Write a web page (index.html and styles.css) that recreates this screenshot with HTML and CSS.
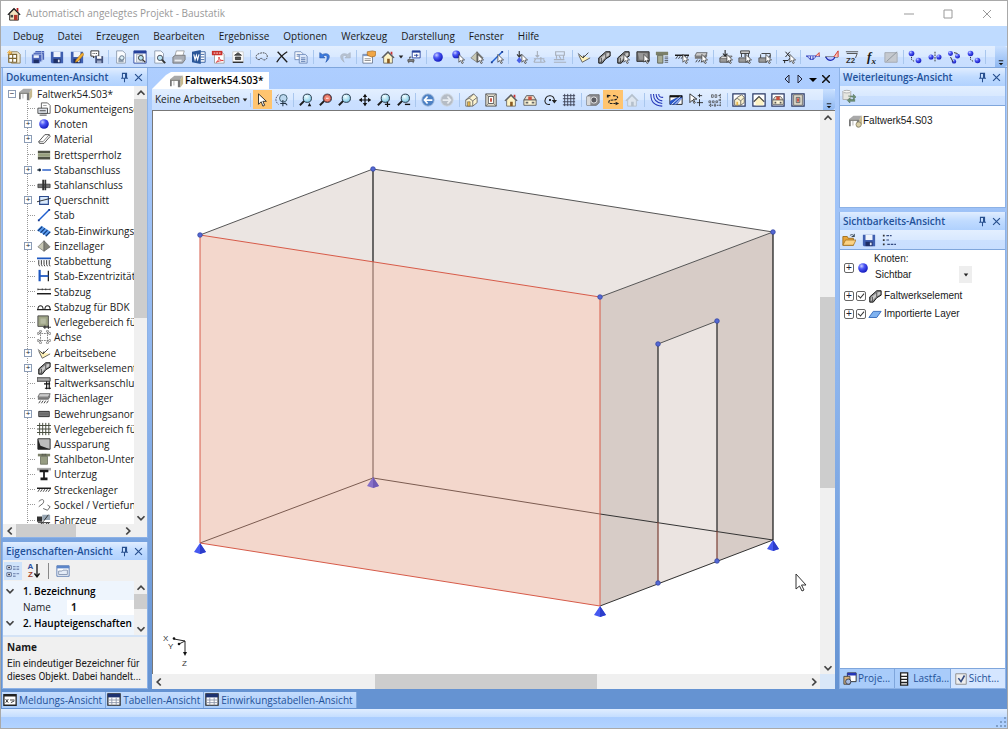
FILE: index.html
```html
<!DOCTYPE html>
<html lang="de">
<head>
<meta charset="utf-8">
<title>Automatisch angelegtes Projekt - Baustatik</title>
<link rel="stylesheet" href="styles.css">
</head>
<body>
<svg class="defs" aria-hidden="true">
<defs>
<radialGradient id="gBall" cx=".35" cy=".3" r=".75"><stop offset="0" stop-color="#c9cfff"/><stop offset=".4" stop-color="#4a55f5"/><stop offset="1" stop-color="#1016b8"/></radialGradient>
<radialGradient id="gLens" cx=".4" cy=".3" r=".8"><stop offset="0" stop-color="#f2fdff"/><stop offset="1" stop-color="#6fc4e4"/></radialGradient>
</defs>
<symbol id="cur" viewBox="0 0 16 16"><path d="M9 5v9l2-2 1.600 3.500 1.500-.7-1.600-3.300h3z" fill="#fff" stroke="#333" stroke-width=".8"/></symbol>
<symbol id="table-logo" viewBox="0 0 16 16"><path d="M0 6l5-4h10l-3 4z" fill="#a9a9a9"/><path d="M0 6h12v2H0z" fill="#8a8a86"/><path d="M0 7h2v7H0zM9 7h3v8H9z" fill="#777"/><path d="M12 6l3-4v9l-3 4z" fill="#c6b98e"/><path d="M4 8h1v5H4z" fill="#aaa"/></symbol>
<symbol id="house" viewBox="0 0 16 16"><path d="M3 8v7h10V8L8 3z" fill="#fdf3c4" stroke="#666"/><path d="M1 9l7-7 7 7" fill="none" stroke="#555" stroke-width="1.300"/><path d="M11 2h2v4l-2-2z" fill="#c33"/><path d="M7 10h3v5H7z" fill="#8a5a22"/></symbol>
<symbol id="house-app" viewBox="0 0 16 16"><path d="M3 7v8h10V7L8 2z" fill="#f5e4c0" stroke="#222"/><path d="M1 9l7-7 7 7" fill="none" stroke="#222" stroke-width="1.600"/><path d="M11 1h2v5l-2-2z" fill="#b22"/><path d="M8 9h4v6H8z" fill="#b3372a"/><path d="M4 9h3v3H4z" fill="#444"/></symbol>
<symbol id="house-off" viewBox="0 0 16 16"><path d="M3 8v7h10V8L8 3z" fill="#dde5ee" stroke="#b4bfcb"/><path d="M1 9l7-7 7 7" fill="none" stroke="#b4bfcb" stroke-width="1.500"/><path d="M7 10h3v5H7z" fill="#b4bfcb"/></symbol>
<symbol id="new" viewBox="0 0 16 16"><path d="M5 2h7l3 3v10H5z" fill="#f3ead2" stroke="#8c7a55"/><path d="M2 5h9v9H2zM2 9.500h9M6.500 5v9" fill="#fff" stroke="#7c6430" stroke-width="1.300"/><path d="M3 0v6M0 3h6M1 1l4 4M5 1L1 5" stroke="#f1a523" stroke-width=".8"/></symbol>
<symbol id="save" viewBox="0 0 16 16"><path d="M1 2h14v13H2l-1-1z" fill="#3f5fb0"/><path d="M4 2h8v6H4z" fill="#eef3fc"/><path d="M4 10h8v5H4z" fill="#1e2f66"/><path d="M9 11h2v3H9z" fill="#dfe6f5"/></symbol>
<symbol id="saveall" viewBox="0 0 16 16"><path d="M5 1h10v10h-3v2h-2v2H1V5h2V3h2z" fill="#4b64b8"/><path d="M5 3h10M3 5h10M13 5v8M12 1v10" stroke="#aebde8" fill="none" stroke-width=".8"/><path d="M3 6h6v3H3z" fill="#eef3fc"/><path d="M3 11h6v4H3z" fill="#1e2f66"/></symbol>
<symbol id="saveedit" viewBox="0 0 16 16"><use href="#save"/><path d="M14 3l2 2-7 8-3 1 1-3z" fill="#f5b234" stroke="#a36b13" stroke-width=".7"/></symbol>
<symbol id="savechat" viewBox="0 0 16 16"><path d="M1 1h9v6H6L4 9V7H1z" fill="#fff" stroke="#222"/><path d="M3 4h1M5 4h1M7 4h1" stroke="#222"/><path d="M6 7h9v8H6z" fill="#43527c"/><path d="M8 7h5v3H8z" fill="#fff"/><path d="M8 12h5v3H8z" fill="#9aa6c4"/></symbol>
<symbol id="docg" viewBox="0 0 16 16"><path d="M3 1h7l3 3v11H3z" fill="#fafcff" stroke="#8b99ad"/><path d="M5 9h6v5H5z" fill="#93a1b1"/><circle cx="9" cy="9" r="2.500" fill="#dff1f8" stroke="#586b80"/></symbol>
<symbol id="docwin" viewBox="0 0 16 16"><path d="M1 1h14v14H1z" fill="#fff" stroke="#25409a"/><path d="M1 1h14v3H1z" fill="#25409a"/><path d="M4 5h7v9H4z" fill="#e6ebf2" stroke="#8b99ad" stroke-width=".7"/><circle cx="9" cy="9" r="2.800" fill="#b9e3f3" stroke="#333"/><path d="M11 11l3 3" stroke="#333" stroke-width="1.600"/></symbol>
<symbol id="docfind" viewBox="0 0 16 16"><path d="M2 1h7l3 3v11H2z" fill="#fafcff" stroke="#8b99ad"/><circle cx="8" cy="9" r="3" fill="#b9e3f3" stroke="#445"/><path d="M10 11l4 4" stroke="#333" stroke-width="2"/></symbol>
<symbol id="print" viewBox="0 0 16 16"><path d="M5 1h9l-2 7H3z" fill="#fff" stroke="#888" stroke-width=".8"/><path d="M1 8l3-2h11v5l-3 4H1z" fill="#a9adb5" stroke="#666" stroke-width=".8"/><path d="M3 11h8v2H3z" fill="#e9ecef"/></symbol>
<symbol id="word" viewBox="0 0 16 16"><path d="M7 2h8v12H7z" fill="#fff" stroke="#2a5699"/><path d="M10 5h4M10 8h4M10 11h4" stroke="#2a5699"/><path d="M0 2l10-2v16L0 14z" fill="#2a5699"/><path d="M2 5l1.500 6L5 6l1.500 5L8 5" fill="none" stroke="#fff" stroke-width="1.300"/></symbol>
<symbol id="pdf" viewBox="0 0 16 16"><path d="M4 2h8l3 3v10H4z" fill="#fff" stroke="#999"/><path d="M1 1h12v5H1z" fill="#c9302c"/><path d="M3 3.500h8" stroke="#fff" stroke-dasharray="2 1"/><path d="M6 14c3-2 4-5 3-6 0 3 2 4 5 4-3 0-6 1-8 2z" fill="none" stroke="#d33"/></symbol>
<symbol id="plate" viewBox="0 0 16 16"><path d="M2 2h12v12H2z" fill="#fff" stroke="#ccc"/><path d="M2 14h12" stroke="#222" stroke-width="1.500"/><path d="M4 6l4-3 4 3zM5 8h6v3H5z" fill="#555" stroke="#222" stroke-width=".8"/></symbol>
<symbol id="lasso" viewBox="0 0 16 16"><path d="M5 11c-5 0-5-6 0-7 5-2 9 0 9 3 0 4-3 5-5 4-1-2-3-2-4 0z" fill="none" stroke="#333" stroke-dasharray="2 1"/></symbol>
<symbol id="del" viewBox="0 0 16 16"><path d="M3 2c3 3 7 8 11 12M14 2C9 5 5 9 2 14" fill="none" stroke="#1d1d1d" stroke-width="1.500"/></symbol>
<symbol id="copy" viewBox="0 0 16 16"><path d="M1 2h7l2 2v7H1z" fill="#fff" stroke="#6b88b8"/><path d="M6 5h7l2 2v8H6z" fill="#dbe7fa" stroke="#6b88b8"/><path d="M3 5h3M3 7h3M8 9h5M8 11h5M8 13h5" stroke="#5776ad"/></symbol>
<symbol id="undo" viewBox="0 0 16 16"><path d="M2 3v6h6L6 7c4-2 6 0 3 7 7-6 4-12-4-9z" fill="#3b7be0" stroke="#2354a8" stroke-width=".7"/></symbol>
<symbol id="redo" viewBox="0 0 16 16"><path d="M14 3v6H8l2-2c-4-2-6 0-3 7C0 8 3 2 11 5z" fill="#b9c4d2" stroke="#a3afbf" stroke-width=".7"/></symbol>
<symbol id="props" viewBox="0 0 16 16"><path d="M1 5h11v10H1z" fill="#fff" stroke="#6c7c93"/><path d="M1 5h11v2H1z" fill="#7e9bc9"/><path d="M3 10h7M3 12h7" stroke="#888"/><path d="M6 2l6-1 4 1-1 5-4 1-5-2z" fill="#f0a646" stroke="#9c5f17" stroke-width=".7"/></symbol>
<symbol id="flow" viewBox="0 0 16 16"><path d="M6 1h9v8H6z" fill="#fff" stroke="#25409a"/><path d="M6 1h9v2H6z" fill="#25409a"/><path d="M8 6h5M11 4.500V8" stroke="#25409a"/><path d="M1 11h7v2H1zM2 13v2M7 13v2M3 10V8h2" fill="#888" stroke="#555"/></symbol>
<symbol id="ball" viewBox="0 0 16 16"><circle cx="8" cy="8" r="5.500" fill="url(#gBall)"/></symbol>
<symbol id="ballc" viewBox="0 0 16 16"><circle cx="6" cy="5" r="4.500" fill="url(#gBall)"/><use href="#cur"/></symbol>
<symbol id="support" viewBox="0 0 16 16"><path d="M8 2L1 9l7 5z" fill="#c8c8b4" stroke="#666" stroke-width=".7"/><path d="M8 2l7 7-7 5z" fill="#85857a" stroke="#555" stroke-width=".7"/></symbol>
<symbol id="supportc" viewBox="0 0 16 16"><use href="#support"/><use href="#cur"/></symbol>
<symbol id="beam" viewBox="0 0 16 16"><path d="M2 14L14 2" stroke="#1f5fd0" stroke-width="1.600"/><path d="M1 13h2v2H1zM13 1h2v2h-2z" fill="#1a3b8c"/></symbol>
<symbol id="beamc" viewBox="0 0 16 16"><use href="#beam"/><use href="#cur"/></symbol>
<symbol id="loadc" viewBox="0 0 16 16"><path d="M6 1v6M3.500 5L6 8l2.500-3" fill="none" stroke="#333" stroke-width="1.300"/><path d="M3 12l3-4 3 4-3 3z" fill="#4a60e8"/><use href="#cur"/></symbol>
<symbol id="off1" viewBox="0 0 16 16"><path d="M5 1v7M3 6l2 2 2-2M1 10h12M1 14h12M3 10l-2 4M9 8v6M12 11l2 3" fill="none" stroke="#a9b1bd" stroke-width="1.300"/></symbol>
<symbol id="off2" viewBox="0 0 16 16"><path d="M3 2h10v4H3zM4 6v4M12 6v4M1 11h12M1 14h14M7 7l2 3" fill="none" stroke="#a9b1bd" stroke-width="1.300"/></symbol>
<symbol id="plane" viewBox="0 0 16 16"><path d="M2 6l4 8 9-5" fill="#fff2ba" stroke="#555"/><path d="M1 4l6 5 6-6M7 9l1-3" fill="none" stroke="#333"/></symbol>
<symbol id="elem" viewBox="0 0 16 16"><path d="M2 9l8-7 5 0v5l-5 3-4 5H2z" fill="#8b8b8b" stroke="#111" stroke-width="1.100"/><path d="M3 13l1-4 7-5 3-1v3l-5 3-4 4z" fill="#c9c9c9"/><path d="M5 14V9M10 9V4" stroke="#222" stroke-width=".8"/></symbol>
<symbol id="elemc" viewBox="0 0 16 16"><use href="#elem"/><use href="#cur"/></symbol>
<symbol id="slab" viewBox="0 0 16 16"><path d="M1 2h14v12H1z" fill="#bdbdbd" stroke="#222"/><path d="M1 2l3 8 11 4H1z" fill="#222"/></symbol>
<symbol id="slabc" viewBox="0 0 16 16"><path d="M1 2h14v11H1z" fill="#747474" stroke="#222"/><path d="M2 3l11 1v7H4z" fill="#999"/><use href="#cur"/></symbol>
<symbol id="tbeam" viewBox="0 0 16 16"><path d="M1 2h14v3H1z" fill="#7b8069"/><path d="M4 5h8v9H4z" fill="#969c82" stroke="#5d6150" stroke-width=".8"/><path d="M6 2v2M8 2v2M10 2v2" stroke="#333" stroke-width=".7"/></symbol>
<symbol id="tbeamc" viewBox="0 0 16 16"><path d="M1 2h14v4H1z" fill="#7b8069"/><path d="M3 6h6v9H3z" fill="#a8ad96" stroke="#5d6150"/><path d="M11 8h4M11 10h4M11 12h4M11 14h4" stroke="#333" stroke-width=".8"/></symbol>
<symbol id="line" viewBox="0 0 16 16"><path d="M0 6h16" stroke="#111" stroke-width="1.600"/><path d="M3 7l-2 3M6 7l-2 3M9 7l-2 3M12 7l-2 3M15 7l-2 3" stroke="#333"/></symbol>
<symbol id="linec" viewBox="0 0 16 16"><use href="#line"/><use href="#cur"/></symbol>
<symbol id="area" viewBox="0 0 16 16"><path d="M3 3h12l-2 4H1z" fill="#ccc" stroke="#333" stroke-width=".7"/><path d="M1 7h12l2-4v4l-2 3H1z" fill="#777"/><path d="M4 11l-2 3M7 11l-2 3M10 11l-2 3M13 11l-2 3" stroke="#333"/></symbol>
<symbol id="areac" viewBox="0 0 16 16"><use href="#area"/><use href="#cur"/></symbol>
<symbol id="pl1" viewBox="0 0 16 16"><path d="M1 9h12v5H1z" fill="#9a9a9a" stroke="#555"/><path d="M1 9l3-2h11l-2 2" fill="#ddd" stroke="#555"/><path d="M7 0v6M4.500 4L7 7l2.500-3" fill="none" stroke="#222" stroke-width="1.200"/><use href="#cur"/></symbol>
<symbol id="pl2" viewBox="0 0 16 16"><path d="M1 9h12v5H1z" fill="#9a9a9a" stroke="#555"/><path d="M3 1h10v3H3zM4 4v4M8 4v4M12 4v4" fill="#ccc" stroke="#333"/><use href="#cur"/></symbol>
<symbol id="pl3" viewBox="0 0 16 16"><path d="M1 9h9v5H1z" fill="#9a9a9a" stroke="#555"/><path d="M4 4h10v5M3 9V5M11 10l3-4" fill="none" stroke="#333"/><use href="#cur"/></symbol>
<symbol id="node-x" viewBox="0 0 16 16"><path d="M1 12h6l4-5M4 2l5 6M9 2L4 8M3 15v-3" fill="none" stroke="#222" stroke-width="1.100"/><use href="#cur"/></symbol>
<symbol id="mom" viewBox="0 0 16 16"><path d="M0 7h16" stroke="#1c2ab4" stroke-width="1.300"/><path d="M2 7c1 5 8 5 9 0" fill="#dbe1ff" stroke="#1c2ab4"/><path d="M5 7v4M8 7v4" stroke="#1c2ab4"/><path d="M11 7l4-4v4" fill="#ffd3cc" stroke="#d0301f"/></symbol>
<symbol id="mom2" viewBox="0 0 16 16"><path d="M0 8h15" stroke="#222"/><path d="M1 8c2 5 9 5 10 0" fill="#b8c4ff" stroke="#1c2ab4" stroke-width="1.400"/><path d="M10 8l5-7v7" fill="#ffc0b5" stroke="#d0301f"/></symbol>
<symbol id="offslab" viewBox="0 0 16 16"><path d="M1 3h14v11H1z" fill="#c5c9cf" stroke="#a2a8b0"/><path d="M3 13L15 2" stroke="#8b929c"/></symbol>
<symbol id="n1" viewBox="0 0 16 16"><circle cx="4" cy="4" r="3.200" fill="url(#gBall)"/><circle cx="12" cy="12" r="3.200" fill="url(#gBall)"/><path d="M4 8v3l3 2" fill="none" stroke="#222" stroke-dasharray="1.500 1"/></symbol>
<symbol id="n2" viewBox="0 0 16 16"><circle cx="3.500" cy="8" r="2.900" fill="url(#gBall)"/><circle cx="12.500" cy="8" r="2.900" fill="url(#gBall)"/><path d="M8 2v12" stroke="#222" stroke-dasharray="2 1"/></symbol>
<symbol id="n3" viewBox="0 0 16 16"><circle cx="4" cy="4" r="2.800" fill="url(#gBall)"/><circle cx="12" cy="7" r="2.800" fill="url(#gBall)"/><circle cx="8" cy="13" r="2.500" fill="url(#gBall)"/><path d="M4 8l3 6M8 3l4 1" stroke="#222"/></symbol>
<symbol id="selarrow" viewBox="0 0 16 16"><path d="M4 1v12l3-3 2 5 2-1-2-4.500h4z" fill="#fff" stroke="#222"/></symbol>
<symbol id="lens" viewBox="0 0 16 16"><path d="M6 9l-5 5" stroke="#1d1d1d" stroke-width="2.200"/><circle cx="9.500" cy="6" r="4.700" fill="url(#gLens)" stroke="#234" stroke-width="1.100"/></symbol>
<symbol id="lenscur" viewBox="0 0 16 16"><path d="M4 2C0 5 0 10 4 13" fill="none" stroke="#446" stroke-dasharray="2 1"/><circle cx="9.500" cy="6" r="4.300" fill="#bcd8ef" stroke="#356"/><path d="M9 8v7M6 12h7M14 14l-3-3" stroke="#234" stroke-width="1.200"/></symbol>
<symbol id="lensw" viewBox="0 0 16 16"><use href="#lens"/><path d="M10 15l2-4 2 4z" fill="#111"/></symbol>
<symbol id="lensr" viewBox="0 0 16 16"><use href="#lens"/><circle cx="9.500" cy="6" r="4.300" fill="#f08472" stroke="#733"/><path d="M8 6h3" stroke="#fff"/></symbol>
<symbol id="lensp" viewBox="0 0 16 16"><use href="#lens"/><path d="M9 13h6M12 10v6" stroke="#111" stroke-width="1.400"/></symbol>
<symbol id="lensm" viewBox="0 0 16 16"><use href="#lens"/><path d="M9 13h6" stroke="#111" stroke-width="1.600"/></symbol>
<symbol id="move" viewBox="0 0 16 16"><path d="M8 2v12M2 8h12" stroke="#111" stroke-width="1.400"/><path d="M8 1l2.500 3.500h-5zM8 15l2.500-3.500h-5zM1 8l3.500-2.500v5zM15 8l-3.500-2.500v5z" fill="#111"/></symbol>
<symbol id="back" viewBox="0 0 16 16"><circle cx="8" cy="8" r="7" fill="#4d81c4" stroke="#98b2d6"/><path d="M13 8H4M7.500 4L4 8l3.500 4" fill="none" stroke="#fff" stroke-width="2"/></symbol>
<symbol id="fwd" viewBox="0 0 16 16"><circle cx="8" cy="8" r="7" fill="#b5bcc5" stroke="#cdd3da"/><path d="M3 8h9M8.500 4L12 8l-3.500 4" fill="none" stroke="#e8ecf0" stroke-width="2"/></symbol>
<symbol id="iso" viewBox="0 0 16 16"><path d="M2 8l3-3 6-4 4 4v6l-5 4H2z" fill="#fbf3d0" stroke="#666"/><path d="M2 8l4-2 4 3v6M10 9l5-4M6 6l5-5" fill="none" stroke="#666"/><path d="M4 10h3v5H4z" fill="#e6b64c" stroke="#555" stroke-width=".6"/></symbol>
<symbol id="frame" viewBox="0 0 16 16"><path d="M2 1h12v14H2z" fill="#dedacb" stroke="#555"/><path d="M5 4h6v8H5z" fill="#fff" stroke="#555"/><path d="M2 1l3 3M14 1l-3 3M2 15l3-3M14 15l-3-3" stroke="#555" stroke-width=".7"/><path d="M7 6h2v4H7z" fill="#c4402f"/></symbol>
<symbol id="front" viewBox="0 0 16 16"><path d="M1 8l3-5h8l3 5z" fill="#e9dccd" stroke="#555"/><path d="M1 8h14v6H1z" fill="#fdf6d8" stroke="#555"/><path d="M6 4h4v4H6z" fill="#c9523f"/><path d="M3 10h3v2H3zM10 10h3v2h-3z" fill="#666"/></symbol>
<symbol id="rot" viewBox="0 0 16 16"><path d="M8 13C3 14 1 10 3 6s9-4 10 2" fill="none" stroke="#222" stroke-width="1.200"/><path d="M10 8h6l-3 4z" fill="#222"/><circle cx="8" cy="8" r="1.200"/></symbol>
<symbol id="grid" viewBox="0 0 16 16"><path d="M3 1v14M6.500 1v14M10 1v14M13.500 1v14M1 3h14M1 6.500h14M1 10h14M1 13.500h14" stroke="#3a3f52"/></symbol>
<symbol id="cam" viewBox="0 0 16 16"><path d="M1 4l3-2h11v9l-3 3H1z" fill="#8e8e92" stroke="#666"/><path d="M1 4h4v10H1z" fill="#d8d8d8"/><circle cx="9" cy="8" r="3.500" fill="#5a5a60" stroke="#eee"/></symbol>
<symbol id="route" viewBox="0 0 16 16"><path d="M2 3h4M8 3c8 0 6 5 0 5S2 12 6 12h5" fill="none" stroke="#222" stroke-width="1.300" stroke-dasharray="3 1"/><path d="M1 2h2v3H1zM11 10l4 2-4 2z" fill="#222"/></symbol>
<symbol id="iso-lines" viewBox="0 0 16 16"><path d="M1 1c0 9 3 13 13 14M4 1c0 7 3 10 10 11M7 1c0 5 2 7 7 8M10 1c0 3 1 4 5 4" fill="none" stroke="#2436b8" stroke-width="1.200"/></symbol>
<symbol id="section" viewBox="0 0 16 16"><path d="M1 3h14v10H1z" fill="#fff" stroke="#111"/><path d="M1 13V9l12-6h2v3L9 13z" fill="#2a57c8"/><path d="M1 3h14v2H1z" fill="#111"/><path d="M3 13L13 4M7 13l7-7" stroke="#fff"/></symbol>
<symbol id="curmove" viewBox="0 0 16 16"><path d="M1 1v10l3-3 2 4 1-1-2-4h4z" fill="#fff" stroke="#222"/><path d="M12 1v4M10 3h5M12 7v8M9 11h7" stroke="#222"/></symbol>
<symbol id="dims" viewBox="0 0 16 16"><path d="M14 1v14M1 14h13M12 3h3M12 8h3M3 12v4M8 12v4" stroke="#333" stroke-dasharray="2 1"/><path d="M4 2h2v3H4zM8 2h2v3H8zM1 9h2v2H1zM5 9h2v2H5zM9 9h2v2H9z" fill="none" stroke="#444" stroke-width=".8"/></symbol>
<symbol id="box" viewBox="0 0 16 16"><path d="M1 1h14v14H1z" fill="#fff" stroke="#2b3a66" stroke-width="1.400"/></symbol>
<symbol id="b-iso" viewBox="0 0 16 16"><use href="#box"/><path d="M3 8l3-3 5-3 3 3v6l-4 3H3z" fill="#fbf3d0" stroke="#666"/><path d="M3 8l3-2 4 3v5M10 9l4-4" fill="none" stroke="#666"/><path d="M5 10h2v4H5z" fill="#e6b64c"/></symbol>
<symbol id="b-house" viewBox="0 0 16 16"><use href="#box"/><path d="M4 14V8l4-4 5 4v6z" fill="#fdf3c4"/><path d="M2 10l6-6 6 6" fill="none" stroke="#444" stroke-width="1.300"/></symbol>
<symbol id="b-front" viewBox="0 0 16 16"><use href="#box"/><path d="M2 8l3-4h6l3 4z" fill="#e9dccd" stroke="#666"/><path d="M2 8h12v5H2z" fill="#fdf6d8" stroke="#666"/><path d="M6 4h4v4H6z" fill="#c9523f"/><path d="M4 10h2v2H4zM10 10h2v2h-2z" fill="#555"/></symbol>
<symbol id="b-frame" viewBox="0 0 16 16"><use href="#box"/><path d="M3 2h10v12H3z" fill="#dedacb" stroke="#666"/><path d="M6 5h4v6H6z" fill="#fff" stroke="#555"/><path d="M7 6h2v4H7z" fill="#c4402f"/></symbol>
<symbol id="doc" viewBox="0 0 16 16"><path d="M5 1h7l3 3v9H5z" fill="#fff" stroke="#555"/><path d="M1 7h11v6H1z" fill="#dfe3ea" stroke="#444"/><path d="M3 10h7M3 15h8" stroke="#333"/><path d="M7 4h4" stroke="#999"/></symbol>
<symbol id="mat" viewBox="0 0 16 16"><path d="M2 11l7-8h5l1 2-7 8H3z" fill="#fff" stroke="#444"/><path d="M3 13l-1-2h5l7-8" fill="none" stroke="#777"/></symbol>
<symbol id="clt" viewBox="0 0 16 16"><path d="M1 3h14v3H1zM1 10h14v3H1z" fill="#4e5144"/><path d="M1 6h14v4H1z" fill="#99a17f"/></symbol>
<symbol id="conn" viewBox="0 0 16 16"><path d="M6 8h10" stroke="#2058c8" stroke-width="1.600"/><circle cx="3" cy="8" r="1.600" fill="#123"/><path d="M0 8h2" stroke="#123"/></symbol>
<symbol id="steel" viewBox="0 0 16 16"><path d="M1 7h14v4H1z" fill="#777" stroke="#222" stroke-width=".7"/><path d="M6 2h2v12H6zM8.500 2h2v12h-2z" fill="#333"/></symbol>
<symbol id="cross" viewBox="0 0 16 16"><path d="M3 4h10v9H3z" fill="#d9e9fb" stroke="#2b4a8c" stroke-width="1.300"/><path d="M0 10l16-4" stroke="#222"/></symbol>
<symbol id="load" viewBox="0 0 16 16"><path d="M0 7l5-5 11 7-5 5z" fill="#5b9df0"/><path d="M1 8l5-5M4 10l5-5M7 12l5-5M10 14l5-5" stroke="#123a7a" stroke-width="1.300"/></symbol>
<symbol id="bed" viewBox="0 0 16 16"><path d="M0 5h16" stroke="#1d57c0" stroke-width="2"/><path d="M2 7v5l1 2M5 7v5l1 2M8 7v5l1 2M11 7v5l1 2M14 7v5l1 2" fill="none" stroke="#222"/></symbol>
<symbol id="exz" viewBox="0 0 16 16"><path d="M3 1v13" stroke="#1d57c0" stroke-width="2.500"/><path d="M13 2v12" stroke="#222" stroke-width="1.500"/><path d="M3 8h10" stroke="#1d57c0" stroke-width="2"/></symbol>
<symbol id="zug" viewBox="0 0 16 16"><path d="M0 10h16" stroke="#111" stroke-width="1.600"/><path d="M1 5h14M1 4v2M6 4v2M10 4v2M15 4v2" stroke="#333"/></symbol>
<symbol id="bdk" viewBox="0 0 16 16"><path d="M0 11h16M1 11c0-6 6-6 6 0M9 11c0-6 6-6 6 0" fill="none" stroke="#222" stroke-width="1.200"/></symbol>
<symbol id="zone" viewBox="0 0 16 16"><path d="M1 1h12v12H1z" fill="#9fa587" stroke="#444"/><path d="M4 4h6v6H4z" fill="#b6bba2"/><path d="M7 14h9M9 12v4M13 12v4" stroke="#222"/></symbol>
<symbol id="axis" viewBox="0 0 16 16"><path d="M4 2v12M12 2v12M2 4h12M2 12h12" stroke="#777" stroke-dasharray="2 1"/><g fill="none" stroke="#777"><circle cx="4" cy="1.500" r="1.200"/><circle cx="12" cy="1.500" r="1.200"/><circle cx="1.500" cy="4" r="1.200"/><circle cx="1.500" cy="12" r="1.200"/><circle cx="14.500" cy="4" r="1.200"/><circle cx="14.500" cy="12" r="1.200"/><circle cx="4" cy="14.500" r="1.200"/><circle cx="12" cy="14.500" r="1.200"/></g></symbol>
<symbol id="fconn" viewBox="0 0 16 16"><path d="M0 2h15v4H0z" fill="#aaa" stroke="#333"/><path d="M11 6v9M14 6v9" stroke="#222" stroke-width="1.400"/><path d="M8 9h7M9 14h7" fill="none" stroke="#111" stroke-width="1.300"/></symbol>
<symbol id="rebar" viewBox="0 0 16 16"><path d="M2 5h12v6H2z" fill="#8c8c8c" stroke="#222"/><path d="M3 7h10M3 9h10" stroke="#555"/></symbol>
<symbol id="mesh" viewBox="0 0 16 16"><path d="M3 1v14M6.500 1v14M10 1v14M13.500 1v14M0 4h16M0 8h16M0 12h16" stroke="#454a3c" stroke-width="1.100"/></symbol>
<symbol id="ibeam" viewBox="0 0 16 16"><path d="M0 1h16v3H0z" fill="#aaa"/><path d="M3 3h10v3H9v6h3v3H4v-3h3V6H3z" fill="#1b1b1b"/></symbol>
<symbol id="sockel" viewBox="0 0 16 16"><path d="M2 4c4-4 7-2 5 2l-5 4M7 12l5 2 3-4-3-2" fill="none" stroke="#666" stroke-width="1.100"/></symbol>
<symbol id="car" viewBox="0 0 16 16"><path d="M0 4h6v6H0z" fill="#333"/><path d="M6 2h9v6H6z" fill="#9aa8b5"/><path d="M1 11h14M3 14l3-3 3 3 3-3 3 3M7 10l6-8" fill="none" stroke="#222"/></symbol>
<symbol id="cats" viewBox="0 0 16 16"><path d="M1 2h5v4H1zM1 10h5v4H1z" fill="#fff" stroke="#445a86"/><path d="M3.500 3v2M2.500 4h2M3.500 11v2M2.500 12h2" stroke="#223"/><path d="M8 3h3M12 3h3M8 6h3M12 6h3M8 11h3M12 11h3M8 14h3" stroke="#7f93bb" stroke-width="1.500"/></symbol>
<symbol id="page" viewBox="0 0 16 16"><path d="M1 2h14v12H1z" fill="#fff" stroke="#4f72ad"/><path d="M1 2h14v3H1z" fill="#5c86c9"/><path d="M3 8h4l1-1h5v5H3z" fill="#e4ecf7" stroke="#8090ad"/></symbol>
<symbol id="link" viewBox="0 0 16 16"><path d="M1 3h9v9H1z" fill="#e6e6e0" stroke="#aaa"/><ellipse cx="5.500" cy="3" rx="4.500" ry="1.500" fill="#f6f6f3" stroke="#aaa"/><path d="M7 8h6V6l3 3-3 3v-2M15 12H9v-2l-3 3 3 3v-2h6" fill="#6d9076" stroke="#4c6b54" stroke-width=".6"/></symbol>
<symbol id="logo-link" viewBox="0 0 16 16"><use href="#table-logo"/><circle cx="11" cy="12" r="3" fill="#d9cfa8" stroke="#8a8468"/></symbol>
<symbol id="open" viewBox="0 0 16 16"><path d="M1 4h5l1 2h6v8H1z" fill="#e8a53a" stroke="#9c6a17"/><path d="M1 14l3-6h12l-3 6z" fill="#fbd284" stroke="#9c6a17" stroke-width=".8"/><path d="M9 3c2-2 4-1 5 1M14 1v3h-3" fill="none" stroke="#234"/></symbol>
<symbol id="list" viewBox="0 0 16 16"><path d="M1 2h2v2H1zM1 7h2v2H1zM1 12h2v2H1z" fill="#333"/><path d="M5 3h6M5 8h4M6 13h10" stroke="#334a80" stroke-width="1.300" stroke-dasharray="3 1"/></symbol>
<symbol id="layer" viewBox="0 0 16 16"><path d="M1 12l5-7h9l-5 7z" fill="#7fb2f0" stroke="#2f66b8"/></symbol>
<symbol id="proj" viewBox="0 0 16 16"><path d="M5 1h10v10H5z" fill="#fff" stroke="#222"/><path d="M5 1h10v3H5z" fill="#2436b8"/><path d="M1 5h7v9H1z" fill="#d6b07a" stroke="#444"/><circle cx="6" cy="11" r="3" fill="#a7bbe0" stroke="#334"/></symbol>
<symbol id="cases" viewBox="0 0 16 16"><path d="M3 1h8v14H3zM3 5h8M3 8.500h8M3 12h8" fill="#fff" stroke="#222" stroke-width="1.500"/></symbol>
<symbol id="tick" viewBox="0 0 16 16"><path d="M2 2h12v12H2z" fill="#eee" stroke="#888"/><path d="M5 7l3 4 4-7" fill="none" stroke="#334a80" stroke-width="1.800"/></symbol>
<symbol id="msg" viewBox="0 0 16 16"><path d="M1 2h14v12H1z" fill="#fff" stroke="#222" stroke-width="1.500"/><path d="M1 2h14v2H1z" fill="#222"/><path d="M3 7l3 4M6 7l-3 4M8 8h5M9 11l4-2" stroke="#222"/></symbol>
<symbol id="tab" viewBox="0 0 16 16"><path d="M1 1h14v13H1z" fill="#fff" stroke="#222" stroke-width="1.400"/><path d="M1 1h14v4H1z" fill="#1d3270"/><path d="M1 8h14M1 11h14M5.500 5v9M10.500 5v9" stroke="#8a93a8"/></symbol>
<symbol id="pin" viewBox="0 0 16 16"><path d="M5 2h6v7H5zM9.500 2v7M3 9h10M8 9v6" fill="none" stroke="#274f8e" stroke-width="1.500"/></symbol>
<symbol id="close" viewBox="0 0 16 16"><path d="M3 3l10 10M13 3L3 13" stroke="#274f8e" stroke-width="1.700"/></symbol>
<symbol id="up" viewBox="0 0 16 16"><path d="M4 10l4-4 4 4" fill="none" stroke="#444" stroke-width="2"/></symbol>
<symbol id="down" viewBox="0 0 16 16"><path d="M4 6l4 4 4-4" fill="none" stroke="#444" stroke-width="2"/></symbol>
<symbol id="left" viewBox="0 0 16 16"><path d="M10 4L6 8l4 4" fill="none" stroke="#444" stroke-width="2"/></symbol>
<symbol id="right" viewBox="0 0 16 16"><path d="M6 4l4 4-4 4" fill="none" stroke="#444" stroke-width="2"/></symbol>
<symbol id="drop" viewBox="0 0 8 8"><path d="M1 2h6L4 6z" fill="#222"/></symbol>
<symbol id="more" viewBox="0 0 8 8"><path d="M1 1h6" stroke="#111" stroke-width="1.200"/><path d="M1 4h6L4 7z" fill="#111"/></symbol>
</svg>

<div class="window">
<header class="titlebar">
  <svg class="ico"><use href="#house-app"/></svg>
  <h1>Automatisch angelegtes Projekt - Baustatik</h1>
  <button aria-label="Minimieren"><svg viewBox="0 0 12 12"><path d="M1 6h10" stroke="#999"/></svg></button>
  <button aria-label="Maximieren"><svg viewBox="0 0 12 12"><path d="M2 2h8v8H2z" fill="none" stroke="#999"/></svg></button>
  <button aria-label="Schließen"><svg viewBox="0 0 12 12"><path d="M2 2l8 8M10 2l-8 8" stroke="#999"/></svg></button>
</header>

<nav class="menu">
  <button>Debug</button><button>Datei</button><button>Erzeugen</button><button>Bearbeiten</button><button>Ergebnisse</button><button>Optionen</button><button>Werkzeug</button><button>Darstellung</button><button>Fenster</button><button>Hilfe</button>
</nav>

<div class="toolbar main-tools" role="toolbar" aria-label="Standard">
  <div class="tools">
  <button aria-label="Neu"><svg><use href="#new"/></svg></button><i></i>
  <button aria-label="Alle speichern"><svg><use href="#saveall"/></svg></button>
  <button aria-label="Speichern"><svg><use href="#save"/></svg></button>
  <button aria-label="Speichern unter"><svg><use href="#saveedit"/></svg></button>
  <button aria-label="Mit Kommentar speichern"><svg><use href="#savechat"/></svg></button><i></i>
  <button aria-label="Dokument"><svg><use href="#docg"/></svg></button>
  <button aria-label="Vorschaufenster"><svg><use href="#docwin"/></svg></button>
  <button aria-label="Seitenansicht"><svg><use href="#docfind"/></svg></button>
  <button aria-label="Drucken"><svg><use href="#print"/></svg></button>
  <button aria-label="Word"><svg><use href="#word"/></svg></button>
  <button aria-label="PDF"><svg><use href="#pdf"/></svg></button>
  <button aria-label="Ausgabe"><svg><use href="#plate"/></svg></button><i></i>
  <button aria-label="Lasso"><svg><use href="#lasso"/></svg></button>
  <button aria-label="Löschen"><svg><use href="#del"/></svg></button>
  <button aria-label="Kopieren"><svg><use href="#copy"/></svg></button><i></i>
  <button aria-label="Rückgängig"><svg><use href="#undo"/></svg></button>
  <button aria-label="Wiederholen"><svg><use href="#redo"/></svg></button><i></i>
  <button aria-label="Eigenschaften"><svg><use href="#props"/></svg></button>
  <button aria-label="Start"><svg><use href="#house"/></svg></button>
  <button class="narrow" aria-label="Startauswahl"><svg><use href="#drop"/></svg></button>
  <button aria-label="Ablauf"><svg><use href="#flow"/></svg></button><i></i>
  <button aria-label="Knoten"><svg><use href="#ball"/></svg></button>
  <button aria-label="Knoten wählen"><svg><use href="#ballc"/></svg></button>
  <button aria-label="Lager wählen"><svg><use href="#supportc"/></svg></button>
  <button aria-label="Stab wählen"><svg><use href="#beamc"/></svg></button><i></i>
  <button aria-label="Knotenlast"><svg><use href="#loadc"/></svg></button>
  <button aria-label="Stablast" disabled><svg><use href="#off1"/></svg></button>
  <button aria-label="Temperatur" disabled><svg><use href="#off2"/></svg></button><i></i>
  <button aria-label="Arbeitsebene"><svg><use href="#plane"/></svg></button>
  <button aria-label="Faltwerkselement"><svg><use href="#elem"/></svg></button>
  <button aria-label="Element wählen"><svg><use href="#elemc"/></svg></button>
  <button aria-label="Aussparung"><svg><use href="#slabc"/></svg></button>
  <button aria-label="Unterzug"><svg><use href="#tbeamc"/></svg></button>
  <button aria-label="Streckenlager"><svg><use href="#linec"/></svg></button>
  <button aria-label="Flächenlager"><svg><use href="#areac"/></svg></button><i></i>
  <button aria-label="Punktlast"><svg><use href="#pl1"/></svg></button>
  <button aria-label="Linienlast"><svg><use href="#pl2"/></svg></button>
  <button aria-label="Flächenlast"><svg><use href="#pl3"/></svg></button><i></i>
  <button aria-label="Koppelung"><svg><use href="#node-x"/></svg></button><i></i>
  <button aria-label="Schnittgrößen"><svg><use href="#mom"/></svg></button>
  <button aria-label="Umhüllende"><svg><use href="#mom2"/></svg></button>
  <button aria-label="Bemessung"><svg viewBox="0 0 16 16"><path d="M1 2h14M2 4h12l-2 5" fill="none" stroke="#444"/><text class="g-z2" x="1" y="15">Z2</text></svg></button>
  <button class="fx" aria-label="Funktion">f<sub>x</sub></button>
  <button aria-label="Schnitt" disabled><svg><use href="#offslab"/></svg></button><i></i>
  <button aria-label="Verschieben"><svg><use href="#n1"/></svg></button>
  <button aria-label="Spiegeln"><svg><use href="#n2"/></svg></button>
  <button aria-label="Drehen"><svg><use href="#n3"/></svg></button>
  <button aria-label="Vervielfältigen"><svg><use href="#n1"/></svg></button><i></i>
  </div>
  <button class="more" aria-label="Weitere"><svg><use href="#more"/></svg></button>
</div>

<main class="work">
  <div class="left">
    <section class="panel docs">
      <header class="phead"><h2>Dokumenten-Ansicht</h2><button aria-label="Anheften"><svg><use href="#pin"/></svg></button><button aria-label="Schließen"><svg><use href="#close"/></svg></button></header>
      <div class="docbody">
        <div class="treebox">
        <ul class="tree">
          <li class="root"><button aria-label="Zuklappen">−</button><svg><use href="#table-logo"/></svg>Faltwerk54.S03*</li>
          <li><b></b><svg><use href="#doc"/></svg>Dokumenteigenschaften</li>
          <li><button aria-label="Aufklappen">+</button><svg><use href="#ball"/></svg>Knoten</li>
          <li><button aria-label="Aufklappen">+</button><svg><use href="#mat"/></svg>Material</li>
          <li><b></b><svg><use href="#clt"/></svg>Brettsperrholz</li>
          <li><button aria-label="Aufklappen">+</button><svg><use href="#conn"/></svg>Stabanschluss</li>
          <li><b></b><svg><use href="#steel"/></svg>Stahlanschluss</li>
          <li><button aria-label="Aufklappen">+</button><svg><use href="#cross"/></svg>Querschnitt</li>
          <li><b></b><svg><use href="#beam"/></svg>Stab</li>
          <li><b></b><svg><use href="#load"/></svg>Stab-Einwirkungsverteiler</li>
          <li><button aria-label="Aufklappen">+</button><svg><use href="#support"/></svg>Einzellager</li>
          <li><b></b><svg><use href="#bed"/></svg>Stabbettung</li>
          <li><b></b><svg><use href="#exz"/></svg>Stab-Exzentrizität</li>
          <li><b></b><svg><use href="#zug"/></svg>Stabzug</li>
          <li><b></b><svg><use href="#bdk"/></svg>Stabzug für BDK</li>
          <li><b></b><svg><use href="#zone"/></svg>Verlegebereich für Stützen</li>
          <li><b></b><svg><use href="#axis"/></svg>Achse</li>
          <li><button aria-label="Aufklappen">+</button><svg><use href="#plane"/></svg>Arbeitsebene</li>
          <li><button aria-label="Aufklappen">+</button><svg><use href="#elem"/></svg>Faltwerkselement</li>
          <li><b></b><svg><use href="#fconn"/></svg>Faltwerksanschluss</li>
          <li><b></b><svg><use href="#area"/></svg>Flächenlager</li>
          <li><button aria-label="Aufklappen">+</button><svg><use href="#rebar"/></svg>Bewehrungsanordnung</li>
          <li><b></b><svg><use href="#mesh"/></svg>Verlegebereich für Matten</li>
          <li><b></b><svg><use href="#slab"/></svg>Aussparung</li>
          <li><b></b><svg><use href="#tbeam"/></svg>Stahlbeton-Unterzug</li>
          <li><b></b><svg><use href="#ibeam"/></svg>Unterzug</li>
          <li><b></b><svg><use href="#line"/></svg>Streckenlager</li>
          <li><b></b><svg><use href="#sockel"/></svg>Sockel / Vertiefung</li>
          <li><b></b><svg><use href="#car"/></svg>Fahrzeug</li>
        </ul>
        </div>
        <div class="vbar"><button aria-label="Nach oben"><svg><use href="#up"/></svg></button><span class="t-docs"></span><em></em><button aria-label="Nach unten"><svg><use href="#down"/></svg></button></div>
      </div>
      <div class="hbar"><button aria-label="Nach links"><svg><use href="#left"/></svg></button><span class="t-docsh"></span><em></em><button aria-label="Nach rechts"><svg><use href="#right"/></svg></button><u></u></div>
    </section>

    <section class="panel props">
      <header class="phead"><h2>Eigenschaften-Ansicht</h2><button aria-label="Anheften"><svg><use href="#pin"/></svg></button><button aria-label="Schließen"><svg><use href="#close"/></svg></button></header>
      <div class="ptools"><button class="on" aria-label="Kategorien"><svg><use href="#cats"/></svg></button><button class="az" aria-label="Alphabetisch"><span>A<br><em>Z</em></span><svg viewBox="0 0 6 16"><path d="M3 1v12M.5 10.500L3 14l2.500-3.500" fill="none" stroke="#111" stroke-width="1.300"/></svg></button><i></i><button aria-label="Eigenschaftenseiten"><svg><use href="#page"/></svg></button></div>
      <div class="pgrid">
        <div class="prows">
          <div class="cat"><svg><use href="#down"/></svg>1. Bezeichnung</div>
          <div class="prow"><label for="name">Name</label><input id="name" value="1"></div>
          <div class="cat"><svg><use href="#down"/></svg>2. Haupteigenschaften</div>
        </div>
        <div class="vbar"><button aria-label="Nach oben"><svg><use href="#up"/></svg></button><span class="t-props"></span><em></em><button aria-label="Nach unten"><svg><use href="#down"/></svg></button></div>
      </div>
      <div class="pdesc"><strong>Name</strong><p>Ein eindeutiger Bezeichner für dieses Objekt. Dabei handelt...</p></div>
    </section>
  </div>

  <section class="centre">
    <div class="tabs">
      <div class="doctab"><svg><use href="#table-logo"/></svg>Faltwerk54.S03*</div>
      <div class="tabctl">
        <button aria-label="Voriges"><svg viewBox="0 0 8 8"><path d="M6 0v8L2 4z" fill="none" stroke="#223"/></svg></button>
        <button aria-label="Nächstes"><svg viewBox="0 0 8 8"><path d="M2 0v8l4-4z" fill="none" stroke="#223"/></svg></button>
        <button aria-label="Liste"><svg viewBox="0 0 8 8"><path d="M0 3h8L4 7z"/></svg></button>
        <button aria-label="Schließen"><svg viewBox="0 0 8 8"><path d="M0 0l8 8M8 0L0 8" stroke="#111" stroke-width="1.500"/></svg></button>
      </div>
    </div>
    <div class="toolbar doc-tools" role="toolbar" aria-label="Ansicht">
      <button class="wp">Keine Arbeitseben<svg><use href="#drop"/></svg></button>
      <div class="tools">
      <i></i>
      <button class="on" aria-label="Auswählen"><svg><use href="#selarrow"/></svg></button>
      <button aria-label="Zoom dynamisch"><svg><use href="#lenscur"/></svg></button><i></i>
      <button aria-label="Zoom Fenster"><svg><use href="#lensw"/></svg></button>
      <button aria-label="Zoom alles"><svg><use href="#lensr"/></svg></button>
      <button aria-label="Zoom"><svg><use href="#lens"/></svg></button>
      <button aria-label="Verschieben"><svg><use href="#move"/></svg></button>
      <button aria-label="Vergrößern"><svg><use href="#lensp"/></svg></button>
      <button aria-label="Verkleinern"><svg><use href="#lensm"/></svg></button><i></i>
      <button aria-label="Zurück"><svg><use href="#back"/></svg></button>
      <button aria-label="Vor" disabled><svg><use href="#fwd"/></svg></button><i></i>
      <button aria-label="Isometrie"><svg><use href="#iso"/></svg></button>
      <button aria-label="Draufsicht"><svg><use href="#frame"/></svg></button>
      <button aria-label="Vorderansicht"><svg><use href="#house"/></svg></button>
      <button aria-label="Seitenansicht"><svg><use href="#front"/></svg></button>
      <button aria-label="Drehen"><svg><use href="#rot"/></svg></button>
      <button aria-label="Raster"><svg><use href="#grid"/></svg></button><i></i>
      <button aria-label="Kamera"><svg><use href="#cam"/></svg></button>
      <button class="on" aria-label="Animation"><svg><use href="#route"/></svg></button>
      <button aria-label="Haus" disabled><svg><use href="#house-off"/></svg></button><i></i>
      <button aria-label="Isolinien"><svg><use href="#iso-lines"/></svg></button>
      <button aria-label="Schnitt"><svg><use href="#section"/></svg></button>
      <button aria-label="Punkt wählen"><svg><use href="#curmove"/></svg></button>
      <button aria-label="Bemaßung"><svg><use href="#dims"/></svg></button><i></i>
      <button aria-label="Ansicht 3D"><svg><use href="#b-iso"/></svg></button>
      <button aria-label="Ansicht vorn"><svg><use href="#b-house"/></svg></button>
      <button aria-label="Ansicht Seite"><svg><use href="#b-front"/></svg></button>
      <button aria-label="Ansicht oben"><svg><use href="#b-frame"/></svg></button>
      </div>
      <button class="more" aria-label="Weitere"><svg><use href="#more"/></svg></button>
    </div>
    <div class="view">
      <svg class="model" viewBox="153 111 667 563" preserveAspectRatio="xMinYMin meet" role="img" aria-label="3D-Modell">
        <path d="M200 235L373 169l400 63-173 65z" fill="#ebe5e2"/>
        <path d="M600 297l173-65v308l-173 66z" fill="#d7ccc7"/>
        <path d="M658 344l59-23v240l-59 22z" fill="#ebe4e1"/>
        <path d="M200 235l400 62v309l-400-63z" fill="#f3d7cc"/>
        <g fill="none" stroke="#555" stroke-width="1">
          <path d="M200 235L373 169l400 63-173 65"/>
          <path d="M373 169v93" stroke="#222" stroke-width="1.300"/>
          <path d="M373 262v216M200 543l173-65 227 36" stroke="#7b5b50"/>
          <path d="M600 514l173 26-173 66" stroke="#333"/>
          <path d="M773 232v308" stroke="#222" stroke-width="1.300"/>
          <path d="M658 344l59-23"/>
          <path d="M658 344v178M717 321v210" stroke="#222" stroke-width="1.200"/>
          <path d="M658 522v61M717 531v30" stroke="#7a3f35" stroke-width="1.200"/>
          <path d="M200 235l400 62v309l-400-63z" stroke="#d65a48"/>
        </g>
        <g fill="#5468d4" stroke="#2c3f9e" stroke-width=".7">
          <circle cx="373" cy="169" r="2.300"/><circle cx="773" cy="232" r="2.300"/><circle cx="600" cy="297" r="2.300"/><circle cx="200" cy="235" r="2.300"/>
          <circle cx="658" cy="344" r="2.300"/><circle cx="717" cy="321" r="2.300"/><circle cx="717" cy="561" r="2.300"/><circle cx="658" cy="583" r="2.300"/>
        </g>
        <path d="M200 543l6 9-6 2-6-2zM600 606l6 9-6 2-6-2zM773 540l6 9-6 2-6-2z" fill="#4659f0"/>
        <path d="M200 543l6 9-6 2zM600 606l6 9-6 2zM773 540l6 9-6 2z" fill="#2c3dcb"/>
        <path d="M373 477l6 9-6 2-6-2z" fill="#8670c8"/>
        <path d="M373 477l6 9-6 2z" fill="#705ab4"/>
        <path d="M174 639l11 2v13M179 644l6-3" fill="none" stroke="#222"/>
        <g fill="#111"><circle cx="174" cy="638.500" r="1.300"/><circle cx="179" cy="644" r="1.300"/><path d="M183 652h4l-2 4z"/></g>
        <g class="axes"><text x="163" y="641">X</text><text x="168" y="649">Y</text><text x="182" y="666">Z</text></g>
        <path d="M796 574v15l3.500-3 2.500 5 2-1-2.500-5h4.500z" fill="#fff" stroke="#333"/>
      </svg>
      <div class="vbar wide"><button aria-label="Nach oben"><svg><use href="#up"/></svg></button><em class="pre-v"></em><span class="t-view"></span><em class="post-v"></em><button aria-label="Nach unten"><svg><use href="#down"/></svg></button></div>
    </div>
    <div class="hbar tall"><button aria-label="Nach links"><svg><use href="#left"/></svg></button><em class="pre-h"></em><span class="t-viewh"></span><em class="post-h"></em><button aria-label="Nach rechts"><svg><use href="#right"/></svg></button><u></u></div>
  </section>

  <div class="right">
    <section class="panel fwd">
      <header class="phead"><h2>Weiterleitungs-Ansicht</h2><button aria-label="Anheften"><svg><use href="#pin"/></svg></button><button aria-label="Schließen"><svg><use href="#close"/></svg></button></header>
      <div class="toolbar side"><button aria-label="Weiterleiten"><svg><use href="#link"/></svg></button></div>
      <div class="fwdbody"><svg class="ico"><use href="#logo-link"/></svg>Faltwerk54.S03</div>
    </section>
    <section class="panel vis">
      <header class="phead"><h2>Sichtbarkeits-Ansicht</h2><button aria-label="Anheften"><svg><use href="#pin"/></svg></button><button aria-label="Schließen"><svg><use href="#close"/></svg></button></header>
      <div class="toolbar side"><button aria-label="Öffnen"><svg><use href="#open"/></svg></button><button aria-label="Speichern"><svg><use href="#save"/></svg></button><button aria-label="Liste"><svg><use href="#list"/></svg></button></div>
      <div class="visbody">
        <div class="vnode"><button class="ex" aria-label="Aufklappen">+</button><svg><use href="#ball"/></svg>
          <div class="vfield"><label for="kn">Knoten:</label><div class="selbox"><select id="kn"><option>Sichtbar</option></select><span><svg><use href="#drop"/></svg></span></div></div></div>
        <div class="vrow"><button class="ex" aria-label="Aufklappen">+</button><input type="checkbox" id="c1" checked><svg><use href="#elem"/></svg><label for="c1">Faltwerkselement</label></div>
        <div class="vrow"><button class="ex" aria-label="Aufklappen">+</button><input type="checkbox" id="c2" checked><svg><use href="#layer"/></svg><label for="c2">Importierte Layer</label></div>
      </div>
      <div class="sidetabs"><button><svg><use href="#proj"/></svg>Proje...</button><button><svg><use href="#cases"/></svg>Lastfa...</button><button class="on"><svg><use href="#tick"/></svg>Sicht...</button></div>
    </section>
  </div>
</main>

<div class="bottomtabs"><button><svg><use href="#msg"/></svg>Meldungs-Ansicht</button><button><svg><use href="#tab"/></svg>Tabellen-Ansicht</button><button><svg><use href="#tab"/></svg>Einwirkungstabellen-Ansicht</button></div>
<footer class="status"><svg viewBox="0 0 12 12"><path d="M9 1h2v2H9zM5 5h2v2H5zM9 5h2v2H9zM1 9h2v2H1zM5 9h2v2H5zM9 9h2v2H9z" fill="#7f9fc8"/></svg></footer>
</div>
</body>
</html>
```
FILE: styles.css
```css
* { box-sizing: border-box; }
html, body { height: 100%; margin: 0; }
body { font: 10px/15px "Open Sans", "Noto Sans", sans-serif; color: #1a1a1a; }
button, input, select { font: inherit; color: inherit; border: 0; background: none; padding: 0; margin: 0; }
h1, h2, p, ul { margin: 0; padding: 0; font-weight: normal; font-size: inherit; }
svg { width: 14px; height: 14px; flex: none; display: block; }
.defs { position: absolute; width: 0; height: 0; }

.window { height: 100vh; display: flex; flex-direction: column; border: 1px solid #a9a9a9; background: #fff; overflow: hidden; }

.titlebar { height: 25px; flex: none; display: flex; align-items: center; padding: 0 7px 0 6px; }
.titlebar h1 { flex: 1; margin-left: 5px; color: #999; }
.titlebar button { width: 26px; margin-left: 13px; display: flex; justify-content: center; }
.titlebar button svg { width: 12px; height: 12px; }

.menu { height: 20px; flex: none; display: flex; align-items: center; gap: 14px; padding-left: 12px; background: #bfdbff; }

.toolbar { flex: none; display: flex; align-items: center; background: linear-gradient(#e3efff, #d9e9ff 50%, #cbe0ff 55%, #c8deff); border-bottom: 1px solid #7fa6dc; }
.toolbar button { display: flex; align-items: center; justify-content: center; }
.tools { flex: 1; display: flex; align-items: center; height: 100%; min-width: 0; }
.tools button { flex: 39 1 0; height: 19px; }
.tools i { flex: 9 1 0; height: 14px; background: linear-gradient(#a9c7ee, #a9c7ee) center / 1px 100% no-repeat; }
.tools .narrow { flex: 10 1 0; }
.tools .narrow svg { width: 6px; height: 6px; }
.tools .on { background: #ffc46f; }
.tools .fx { font: italic bold 13px/14px "Liberation Serif", serif; }
.fx sub { font-size: 9px; line-height: 9px; align-self: flex-end; }
.g-z2 { font: bold 9px "Liberation Sans", sans-serif; fill: #333; }
.toolbar .more { width: 12px; align-self: stretch; align-items: flex-end; background: linear-gradient(#c9e0ff, #8fb8f2); border-radius: 0 3px 3px 0; }
.more svg { width: 6px; height: 8px; }
.main-tools { height: 22px; padding-left: 3px; }
.main-tools .tools { margin-right: 7px; }

.work { flex: 1; min-height: 0; display: flex; gap: 4px; padding: 0 1px; background: linear-gradient(#aeceff, #8db5ee 50%, #6593d2); }
.left { width: 146px; display: flex; flex-direction: column; gap: 4px; }
.centre { flex: 1; min-width: 0; display: flex; flex-direction: column; }
.right { width: 167px; display: flex; flex-direction: column; gap: 4px; }
.panel { display: flex; flex-direction: column; min-height: 0; background: #fff; border: 1px solid #8db2e6; border-top: 0; }

.phead { height: 18px; flex: none; display: flex; align-items: center; padding: 0 3px; background: linear-gradient(#e0edff, #c0dbff 50%, #b0d1fe); }
.phead h2 { flex: 1; font-weight: 600; color: #1f5199; white-space: nowrap; }
.phead button { margin-left: 3px; }
.phead svg { width: 11px; height: 11px; }

.docs { flex: 1; }
.docbody { flex: 1; min-height: 0; display: flex; }
.treebox { flex: 1; min-width: 0; overflow: hidden; }
.tree { list-style: none; height: calc(100% + 4px); display: flex; flex-direction: column; background: repeating-linear-gradient(#999 0 1px, #fff 1px 2px) 24px 0 / 1px 100% no-repeat; }
.tree li { flex: 1; min-height: 0; display: flex; align-items: center; padding-left: 21px; white-space: nowrap; line-height: 14px; }
.tree li svg { margin: 0 3px 0 5px; }
.tree li.root { padding-left: 5px; background: #fff; }
.tree li.root svg { margin: 0 4px 0 3px; }
.tree button, .ex { width: 8px; height: 8px; flex: none; border: 1px solid #8c9cb5; background: #fff; font: 8px/6px "Liberation Sans", sans-serif; color: #223; text-align: center; }
.tree b { width: 8px; flex: none; margin: 0 -4px 0 4px; height: 1px; background: repeating-linear-gradient(90deg, #999 0 1px, #fff 1px 2px); }

.vbar { width: 13px; flex: none; display: flex; flex-direction: column; background: #f0f0f0; }
.hbar { height: 13px; flex: none; display: flex; background: #f0f0f0; }
.vbar button, .hbar button { width: 13px; height: 13px; flex: none; display: flex; align-items: center; justify-content: center; }
.vbar span, .hbar span { background: #cdcdcd; }
.vbar em, .hbar em { flex: 1; }
.hbar u { width: 13px; }
.t-docs { height: 50%; }
.t-docsh { width: 42%; }
.t-props { height: 15px; }
.vbar.wide { width: 15px; }
.vbar.wide button { width: 15px; }
.hbar.tall { height: 15px; }
.hbar.tall button { height: 15px; }
.hbar.tall u { width: 15px; background: #d9e7f8; }
.vbar .pre-v { flex: 172 1 0; }
.vbar .t-view { flex: 190 1 0; }
.vbar .post-v { flex: 172 1 0; }
.hbar .pre-h { flex: 209 1 0; }
.hbar .t-viewh { flex: 222 1 0; }
.hbar .post-h { flex: 209 1 0; }

.props { flex: none; }
.ptools { height: 21px; display: flex; align-items: center; gap: 3px; background: #f0f0f0; padding-left: 1px; }
.ptools button { width: 18px; height: 18px; display: flex; align-items: center; justify-content: center; }
.ptools .on { background: #cfe3fa; }
.ptools i { width: 1px; height: 16px; background: #888; margin: 0 2px; }
.az { gap: 1px; font: bold 8px/8px "Liberation Sans", sans-serif; color: #2d4fa0; }
.az em { font-style: normal; color: #a2452d; }
.az svg { width: 6px; height: 16px; }
.pgrid { display: flex; height: 54px; }
.prows { flex: 1; min-width: 0; overflow: hidden; background: #eef5fd; padding-top: 2px; }
.cat { height: 16px; display: flex; align-items: center; font-weight: 600; white-space: nowrap; gap: 6px; color: #000; }
.prow { height: 16px; display: flex; align-items: center; padding-left: 20px; }
.prow label { width: 44px; }
.prow input { flex: 1; min-width: 0; height: 15px; padding-left: 4px; background: #fff; font-weight: bold; }
.pdesc { height: 53px; background: #f0f0f0; border-top: 2px solid #d4e3f6; padding: 4px 0 0 4px; line-height: 13px; }
.pdesc strong { display: block; margin-bottom: 3px; }
.pdesc p { font-family: Roboto, "Liberation Sans", sans-serif; }

.tabs { height: 21px; flex: none; display: flex; justify-content: space-between; align-items: flex-end; }
.doctab { height: 17px; display: flex; align-items: center; gap: 1px; padding: 0 6px 0 18px; font-weight: 600; color: #000; background: #fff; clip-path: polygon(19px 0, 100% 0, 100% 100%, 0 100%, 14px 3px); }
.tabctl { display: flex; gap: 5px; padding: 0 5px 6px 0; }
.tabctl svg { width: 8px; height: 8px; }
.doc-tools { height: 22px; border-bottom-color: #777; }
.doc-tools .wp { width: 96px; gap: 2px; justify-content: flex-end; white-space: nowrap; }
.wp svg { width: 6px; height: 6px; }
.doc-tools .tools { margin-right: 15px; }
.view { flex: 1; min-height: 0; display: flex; background: #fff; border-left: 1px solid #777; }
.model { flex: 1; min-width: 0; height: 100%; }
.axes { font: 8px "Liberation Sans", sans-serif; fill: #333; }

.fwd { height: 140px; flex: none; }
.side { height: 20px; padding-left: 2px; gap: 6px; }
.fwdbody { display: flex; align-items: center; padding: 8px 9px; font: 10px/14px "Liberation Sans", sans-serif; }
.vis { flex: 1; }
.visbody { flex: 1; padding: 1px 4px; font: 10px/14px "Liberation Sans", sans-serif; }
.ex { width: 10px; height: 10px; border: 1px solid #666; border-radius: 2px; font-size: 10px; line-height: 8px; }
.vnode { display: flex; align-items: center; height: 34px; gap: 2px; margin-bottom: 2px; }
.vfield { margin-left: 2px; line-height: 12px; }
.selbox { display: flex; align-items: center; width: 98px; margin-top: 1px; }
.selbox select { flex: 1; appearance: none; padding-left: 1px; }
.selbox span { width: 13px; height: 17px; background: #eee; display: flex; align-items: center; justify-content: center; }
.selbox svg { width: 6px; height: 6px; }
.vrow { display: flex; align-items: center; height: 18px; gap: 2px; }
.vrow input { appearance: none; width: 10px; height: 10px; border: 1px solid #666; border-radius: 2px; position: relative; }
.vrow input:checked::after { content: ""; position: absolute; left: 2px; top: 0; width: 3px; height: 5px; border: solid #333; border-width: 0 1px 1px 0; rotate: 40deg; }
.sidetabs { height: 20px; flex: none; display: flex; background: #a9ccfa; border-top: 1px solid #7fa6dc; }
.sidetabs button { flex: 1; display: flex; align-items: center; gap: 1px; padding-left: 3px; color: #1f5199; white-space: nowrap; }
.sidetabs button + button { border-left: 1px solid #7fa6dc; }
.sidetabs .on { background: #d5e6ff; }

.bottomtabs { height: 20px; flex: none; display: flex; align-items: stretch; padding: 3px 1px 1px; background: #6593d2; }
.bottomtabs button { display: flex; align-items: center; gap: 2px; padding: 0 3px 0 1px; background: linear-gradient(#c4dcfd, #a9ccfa); color: #1f5199; border-right: 1px solid #7fa6dc; }
.status { height: 19px; flex: none; display: flex; justify-content: flex-end; align-items: flex-end; background: linear-gradient(#e0edff, #c5deff 40%, #aacdff 45%, #b2d3ff); }
.status svg { width: 12px; height: 12px; }
```
